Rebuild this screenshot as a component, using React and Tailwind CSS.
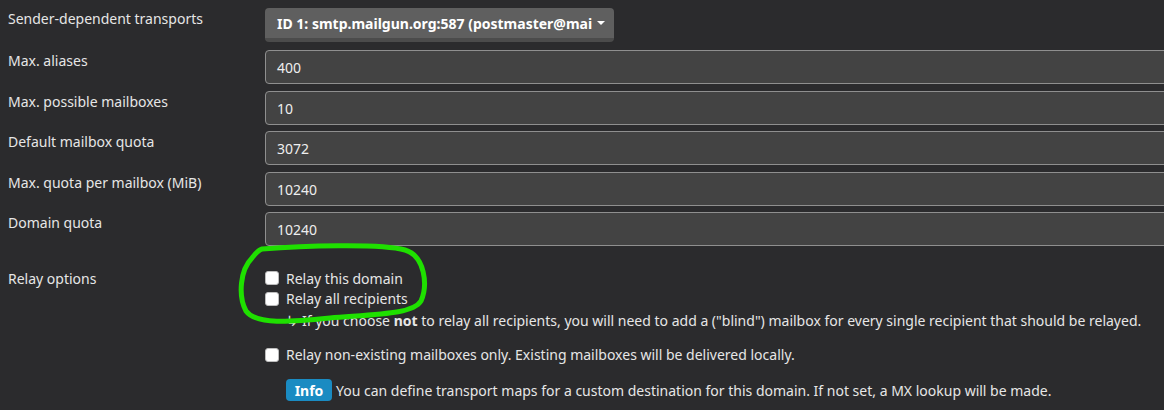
import React from "react";

const rows = [
  { label: "Max. aliases", value: "400", mb: "mb-[7px]" },
  { label: "Max. possible mailboxes", value: "10", mb: "mb-[6px]" },
  { label: "Default mailbox quota", value: "3072", mb: "mb-[7px]" },
  { label: "Max. quota per mailbox (MiB)", value: "10240", mb: "mb-[6px]" },
  { label: "Domain quota", value: "10240", mb: "mb-[7px]" },
];

function Check() {
  return (
    <span className="inline-block w-[14px] h-[14px] rounded-[3px] bg-white border border-[#bdbdbd] shrink-0" />
  );
}

export default function App() {
  return (
    <div
      className="relative w-[1164px] h-[410px] overflow-hidden bg-[#2b2b2d] text-[#e6e6e6] text-[14px] leading-[21px]"
      style={{ fontFamily: '"Noto Sans", "Open Sans", sans-serif' }}
    >
      <div className="pt-[8px] pl-[8px]">
        {/* sender dependent transports */}
        <div className="flex mb-[8px]">
          <div className="w-[257px] shrink-0">Sender-dependent transports</div>
          <div className="w-[349px] h-[34px] rounded-[4px] bg-[#5f5f5f] border-b-[4px] border-[#4b4b4b] flex items-center pl-[12px] pr-[8px] font-bold text-white">
            <span className="whitespace-nowrap">ID 1: smtp.mailgun.org:587 (postmaster@mai</span>
            <span className="ml-[5px] w-0 h-0 border-l-[4px] border-r-[4px] border-t-[4px] border-l-transparent border-r-transparent border-t-white" />
          </div>
        </div>

        {rows.map((r) => (
          <div key={r.label} className={`flex ${r.mb}`}>
            <div className="w-[257px] shrink-0">{r.label}</div>
            <div className="w-[920px] shrink-0 h-[34px] rounded-[4px] bg-[#434343] border border-[#8f8f8f] flex items-center pl-[11px] text-[#eeeeee]">
              {r.value}
            </div>
          </div>
        ))}

        {/* relay options */}
        <div className="flex mt-[22px]">
          <div className="w-[257px] shrink-0">Relay options</div>
          <div className="flex flex-col">
            <label className="flex items-center gap-[7px] h-[20px]">
              <Check />
              <span>Relay this domain</span>
            </label>
            <label className="flex items-center gap-[7px] h-[21px]">
              <Check />
              <span>Relay all recipients</span>
            </label>
            <div className="pl-[21px] h-[22px] flex items-center whitespace-nowrap">
              <span className="mr-[4px]">↳</span>
              <span>
                If you choose <b>not</b> to relay all recipients, you will need to add a ("blind") mailbox for every single recipient that should be relayed.
              </span>
            </div>
            <label className="flex items-center gap-[7px] h-[21px] mt-[13px]">
              <Check />
              <span>Relay non-existing mailboxes only. Existing mailboxes will be delivered locally.</span>
            </label>
            <div className="flex items-center mt-[14px] pl-[21px] gap-[4px] whitespace-nowrap">
              <span className="inline-flex items-center justify-center w-[46px] h-[22px] rounded-[4px] bg-[#1a8bc2] text-white font-bold">
                Info
              </span>
              <span>You can define transport maps for a custom destination for this domain. If not set, a MX lookup will be made.</span>
            </div>
          </div>
        </div>
      </div>

      <svg className="absolute left-0 top-0 pointer-events-none" width="1164" height="410">
        <path
          d="M 262 249 C 300 246, 380 243, 405 250 C 425 256, 428 285, 421 301 C 413 314, 380 314, 330 318 C 290 322, 256 325, 246 311 C 238 296, 240 270, 252 258 C 256 253, 258 250, 262 249"
          fill="none"
          stroke="#1fe000"
          strokeWidth="5"
          strokeLinecap="round"
          strokeLinejoin="round"
        />
      </svg>
    </div>
  );
}
